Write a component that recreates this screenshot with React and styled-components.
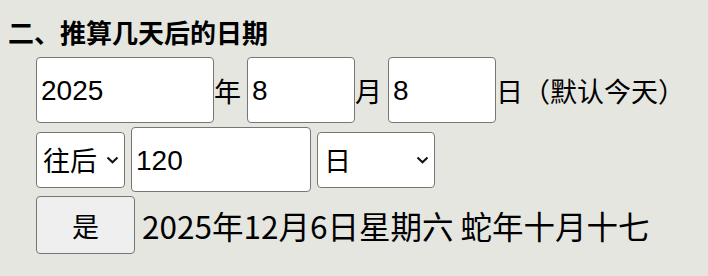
import styled, { createGlobalStyle } from "styled-components";

const GlobalStyle = createGlobalStyle`
  body {
    margin: 8px;
    background: #e6e6e1;
    font-family: "Noto Sans CJK SC", "Noto Sans", sans-serif;
    color: #000;
  }
`;

const Section = styled.div`
  display: flex;
  flex-direction: column;
`;

const Title = styled.div`
  font-weight: bold;
  font-size: 26px;
  line-height: 36px;
  margin: 6px 0 7px;
`;

const Row = styled.div`
  display: flex;
  align-items: center;
  gap: ${(props) => props.$gap || "6px"};
  padding-left: 28px;
  margin-bottom: 4px;
`;

const Field = styled.input`
  box-sizing: border-box;
  width: ${(props) => props.$width};
  height: ${(props) => props.$height || "66px"};
  border: 1px solid #767676;
  border-radius: 4px;
  background: #fff;
  padding: 2px 4px 0;
  font-family: "Liberation Sans", Arial, sans-serif;
  font-size: 28px;
  color: #000;
`;

const Label = styled.span`
  font-size: 27px;
  margin-right: ${(props) => props.$after || "0"};
  margin-left: -6px;
  white-space: nowrap;
`;

const PickerWrap = styled.div`
  position: relative;
  display: flex;
`;

const Picker = styled.select`
  box-sizing: border-box;
  appearance: none;
  width: ${(props) => props.$width};
  height: 56px;
  border: 1px solid #767676;
  border-radius: 4px;
  background: #fff;
  padding: 0 0 0 6px;
  font-family: "Noto Sans CJK SC", sans-serif;
  font-size: 27px;
  color: #000;
`;

const Chevron = styled.svg`
  position: absolute;
  right: 6px;
  top: 24px;
  width: 13px;
  height: 8px;
  pointer-events: none;
`;

const Button = styled.button`
  box-sizing: border-box;
  width: 99px;
  height: 58px;
  border: 1px solid #767676;
  border-radius: 4px;
  background: #efefef;
  font-family: "Noto Sans CJK SC", sans-serif;
  font-size: 27px;
  color: #000;
`;

const Result = styled.span`
  font-size: 31.5px;
  white-space: nowrap;
`;

const Select = ({ width, children, ...rest }) => (
  <PickerWrap>
    <Picker $width={width} {...rest}>
      {children}
    </Picker>
    <Chevron viewBox="0 0 13 8">
      <path d="M1.5 1.5 L6.5 6.3 L11.5 1.5" fill="none" stroke="#111" strokeWidth="2" />
    </Chevron>
  </PickerWrap>
);

export default function App() {
  return (
    <>
      <GlobalStyle />
      <Section>
        <Title>二、推算几天后的日期</Title>
        <Row>
          <Field $width="178px" defaultValue="2025" />
          <Label>年</Label>
          <Field $width="108px" defaultValue="8" />
          <Label>月</Label>
          <Field $width="108px" defaultValue="8" />
          <Label>日（默认今天）</Label>
        </Row>
        <Row>
          <Select width="89px" defaultValue="after">
            <option value="after">往后</option>
            <option value="before">往前</option>
          </Select>
          <Field $width="180px" $height="65px" defaultValue="120" />
          <Select width="118px" defaultValue="day">
            <option value="day">日</option>
            <option value="month">月</option>
            <option value="year">年</option>
          </Select>
        </Row>
        <Row $gap="7px">
          <Button>是</Button>
          <Result>2025年12月6日星期六 蛇年十月十七</Result>
        </Row>
      </Section>
    </>
  );
}
